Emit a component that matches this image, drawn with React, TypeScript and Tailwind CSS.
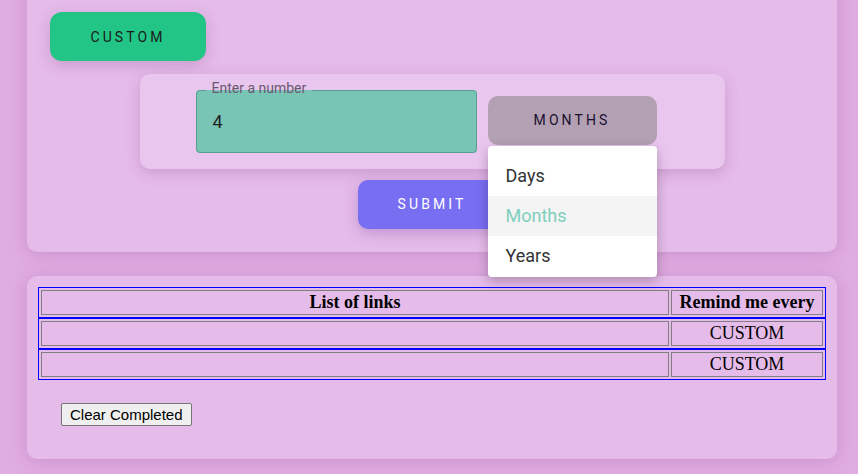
const rows = ["CUSTOM", "CUSTOM"];

function LinkTable({ cells, head }: { cells: [string, string]; head?: boolean }) {
	const Cell = head ? "th" : "td";
	return (
		<table className="w-full border border-[#0000ff] border-separate border-spacing-[2px] font-['Liberation_Serif',serif] text-[18px] text-black">
			<tbody>
				<tr>
					<Cell className="border border-[#808080] p-px text-center leading-[21px] font-bold">
						{cells[0]}
					</Cell>
					<Cell
						className={`w-[152px] border border-[#808080] p-px text-center leading-[21px] ${head ? "font-bold" : "font-normal"}`}
					>
						{cells[1]}
					</Cell>
				</tr>
			</tbody>
		</table>
	);
}

export default function App() {
	return (
		<div className="min-h-screen w-full overflow-hidden bg-[#e0ade2] pl-[27px] pr-[21px] font-['Roboto',sans-serif]">
			<div className="relative -mt-[20px] rounded-[10px] bg-[#e5bbe9] pt-[32px] pb-[23px] shadow-[0_2px_18px_rgba(160,90,160,0.35)]">
				<button className="ml-[23px] flex h-[49px] w-[156px] items-center justify-center rounded-[12px] bg-[#22c585] pt-px text-[14px] tracking-[0.22em] text-[#1b1b1b] shadow-[0_4px_14px_rgba(140,80,140,0.3)]">
					CUSTOM
				</button>

				<div className="mx-auto mt-[13px] flex h-[95px] w-[585px] items-start gap-[11px] rounded-[10px] bg-[#e9c6ee] pl-[56px] shadow-[0_4px_14px_rgba(150,80,150,0.3)]">
					<fieldset className="mt-[7px] h-[72px] w-[281px] rounded-[4px] border border-[#5b9d8e] bg-[#78c5b6] pl-[9px]">
						<legend className="px-[6px] text-[14px] leading-[18px] text-[#6b5870]">
							<span className="relative -top-[2px]">Enter a number</span>
						</legend>
						<div className="pl-[7px] pt-[12px] text-[18px] leading-[22px] text-[#222]">4</div>
					</fieldset>
					<div className="relative mt-[22px]">
						<button className="flex h-[49px] w-[169px] items-center justify-center rounded-[10px] bg-[#b3a1b3] text-[14px] tracking-[0.22em] text-[#1a1030]">
							MONTHS
						</button>
						<div className="absolute left-0 top-[50px] z-10 w-[169px] rounded-[4px] bg-white pt-[10px] pb-px text-[18px] text-[#333] shadow-[0_4px_12px_rgba(0,0,0,0.25)]">
							<div className="flex h-[40px] items-center pl-[18px] pb-[2px]">Days</div>
							<div className="flex h-[40px] items-center bg-[#f4f4f4] pl-[18px] pb-[2px] text-[#80cfbd]">Months</div>
							<div className="flex h-[40px] items-center pl-[18px] pb-[2px]">Years</div>
						</div>
					</div>
				</div>

				<button className="mx-auto mt-[11px] flex h-[49px] w-[148px] items-center justify-center rounded-[10px] bg-[#786ef2] text-[14px] tracking-[0.22em] text-white shadow-[0_4px_14px_rgba(120,80,160,0.35)]">
					SUBMIT
				</button>
			</div>

			<div className="mt-[24px] rounded-[10px] bg-[#e5bbe9] px-[11px] pt-[11px] pb-[32px] shadow-[0_2px_18px_rgba(160,90,160,0.35)]">
				<LinkTable head cells={["List of links", "Remind me every"]} />
				{rows.map((r, i) => (
					<LinkTable key={i} cells={["", r]} />
				))}
				<button className="ml-[23px] mt-[23px] rounded-[2px] border border-[#767676] bg-[#efefef] px-[8px] py-[2px] font-['Liberation_Sans',sans-serif] text-[15px] leading-[17px] text-black">
					Clear Completed
				</button>
			</div>
		</div>
	);
}
